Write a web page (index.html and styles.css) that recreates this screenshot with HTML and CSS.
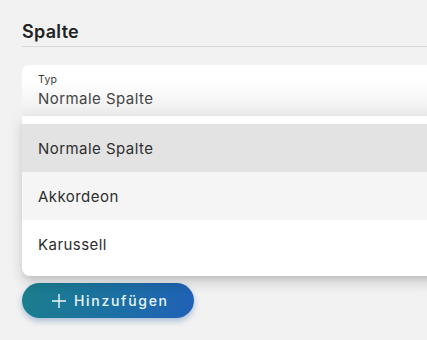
FILE: index.html
```html
<!DOCTYPE html>
<html lang="de">
<head>
<meta charset="utf-8">
<link rel="stylesheet" href="styles.css">
</head>
<body>
<div class="page">
  <h2 class="title">Spalte</h2>
  <div class="divider"></div>
  <div class="select-wrap">
    <div class="field">
      <div class="field-label">Typ</div>
      <div class="field-value">Normale Spalte</div>
    </div>
    <div class="menu">
      <div class="option active">Normale Spalte</div>
      <div class="option hover">Akkordeon</div>
      <div class="option">Karussell</div>
    </div>
  </div>
  <button class="add-btn">
    <svg class="plus" width="14" height="14" viewBox="0 0 14 14"><path d="M7 0V14M0 7H14" stroke="currentColor" stroke-width="1.4" fill="none"/></svg>
    <span>Hinzufügen</span>
  </button>
</div>
</body>
</html>
```
FILE: styles.css
```css
html, body {
  margin: 0;
  padding: 0;
  background: #f2f2f2;
}
body {
  font-family: "Inter", "Open Sans", sans-serif;
  color: #2a2a2a;
}
.page {
  width: 427px;
  height: 340px;
  overflow: hidden;
  box-sizing: border-box;
  padding: 19px 0 0 22px;
}
.title {
  margin: 0;
  font-size: 18px;
  font-weight: 600;
  line-height: 25px;
  color: #222;
  letter-spacing: 0.3px;
}
.divider {
  margin-top: 2px;
  height: 1px;
  background: #dadada;
  width: 405px;
}
.select-wrap {
  margin-top: 18px;
  position: relative;
  width: 420px;
  height: 211px;
}
.field {
  height: 51px;
  border-radius: 7px 7px 0 0;
  background: linear-gradient(180deg, #ffffff 30%, #eeeeee 100%);
  padding: 0 16px;
  box-sizing: border-box;
}
.field-label {
  padding-top: 8px;
  font-size: 10.5px;
  line-height: 13px;
  color: #3a3a3a;
  letter-spacing: 0.3px;
}
.field-value {
  margin-top: 3px;
  font-size: 15px;
  line-height: 20px;
  color: #444;
  letter-spacing: 0.45px;
}
.menu {
  position: absolute;
  left: 0;
  top: 51px;
  width: 100%;
  background: #fff;
  padding: 8px 0;
  border-radius: 0 0 8px 8px;
  box-shadow: 0 5px 6px -3px rgba(0,0,0,0.12), 0 8px 12px 1px rgba(0,0,0,0.08), 0 3px 16px 2px rgba(0,0,0,0.06);
}
.option {
  height: 48px;
  line-height: 49px;
  padding: 0 16px;
  font-size: 15px;
  color: #2e2e2e;
  letter-spacing: 0.45px;
}
.option.active { background: #e3e3e3; }
.option.hover { background: #f5f5f5; }
.add-btn {
  margin-top: 7px;
  display: flex;
  align-items: center;
  gap: 8px;
  height: 35px;
  width: 172px;
  padding: 0 0 0 30px;
  border: none;
  border-radius: 18px;
  background: linear-gradient(110deg, #1b7f8c 0%, #1d6ea6 60%, #2060b8 100%);
  color: #e9f6f6;
  font-family: "Inter", "Open Sans", sans-serif;
  font-size: 14px;
  font-weight: 500;
  letter-spacing: 1.7px;
  box-shadow: 0 3px 6px rgba(30, 90, 160, 0.35);
}
.plus { flex: none; }
```
